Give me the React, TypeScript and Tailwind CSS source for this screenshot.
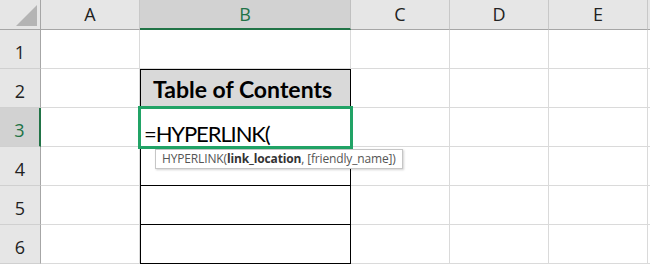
import React from 'react';

const cols = ['A', 'B', 'C', 'D', 'E'];
const rows = [1, 2, 3, 4, 5, 6];

const headFont = { fontFamily: '"Open Sans", "Noto Sans", sans-serif' };
const cellFont = { fontFamily: 'Lato, "Open Sans", sans-serif' };

export default function App() {
    return (
        <div className="w-[650px] h-[265px] overflow-hidden bg-white relative">
            <div className="grid grid-cols-[41px_99px_211px_99px_99px_99px_1fr] grid-rows-[30px_39px_39px_39px_39px_39px_39px]">
                {/* Corner */}
                <div className="bg-[#e6e6e6] border-r border-b border-[#a6a6a6] relative">
                    <div
                        className="absolute left-[16px] top-[5px] w-[21px] h-[21px] bg-[#b4b4b4]"
                        style={{ clipPath: 'polygon(100% 0, 100% 100%, 0 100%)' }}
                    />
                </div>

                {/* Column headers */}
                {cols.map(c => {
                    const sel = c === 'B';
                    return (
                        <div
                            key={c}
                            style={headFont}
                            className={`flex items-center justify-center text-[18px] ${sel
                                ? 'bg-[#d2d2d2] text-[#217346] border-b-[2px] border-b-[#217346] border-r border-r-[#c0c0c0]'
                                : 'bg-[#e6e6e6] text-[#222] border-b border-b-[#a6a6a6] border-r border-r-[#c8c8c8]'
                                }`}
                        >
                            {c}
                        </div>
                    );
                })}
                <div className="bg-[#e6e6e6] border-b border-[#a6a6a6]" />

                {rows.map(r => {
                    const sel = r === 3;
                    return (
                        <React.Fragment key={r}>
                            <div
                                style={headFont}
                                className={`flex items-end justify-center pb-[2px] text-[18px] border-b border-b-[#d0d0d0] ${sel
                                    ? 'bg-[#d2d2d2] text-[#217346] border-r-[2px] border-r-[#217346]'
                                    : 'bg-[#e6e6e6] text-[#222] border-r border-r-[#a6a6a6]'
                                    }`}
                            >
                                {r}
                            </div>

                            {/* A */}
                            <div className="border-r border-b border-[#dadada]" />

                            {/* B */}
                            {r === 1 && <div className="border-r border-b border-[#dadada]" />}
                            {r === 2 && (
                                <div
                                    style={cellFont}
                                    className="bg-[#d9d9d9] border border-black flex items-center pl-[12px] pt-[1px] text-[23px] font-bold text-black leading-none"
                                >
                                    Table of Contents
                                </div>
                            )}
                            {r === 3 && (
                                <div className="relative border-x border-black">
                                    <div className="absolute -left-[3px] -top-[2px] -right-[3px] -bottom-[2px] border-[3px] border-[#21a366] z-10" />
                                    <div
                                        style={cellFont}
                                        className="absolute left-[3px] bottom-[2px] text-[22px] tracking-[-1.1px] text-black leading-none z-20"
                                    >
                                        =HYPERLINK(
                                    </div>
                                </div>
                            )}
                            {r >= 4 && <div className="border-x border-b border-black" />}

                            {/* C D E */}
                            <div className="border-r border-b border-[#dadada]" />
                            <div className="border-r border-b border-[#dadada]" />
                            <div className="border-r border-b border-[#dadada]" />
                            <div className="border-b border-[#dadada]" />
                        </React.Fragment>
                    );
                })}
            </div>

            {/* Function tooltip */}
            <div
                style={headFont}
                className="absolute left-[155px] top-[149px] h-[20px] px-[6px] flex items-center bg-white border border-[#c6c6c6] shadow-[1px_1px_2px_rgba(0,0,0,0.18)] text-[12px] tracking-[-0.15px] text-[#555] whitespace-nowrap z-30"
            >
                HYPERLINK(<span className="font-bold text-[#333]">link_location</span>, [friendly_name])
            </div>
        </div>
    );
}
